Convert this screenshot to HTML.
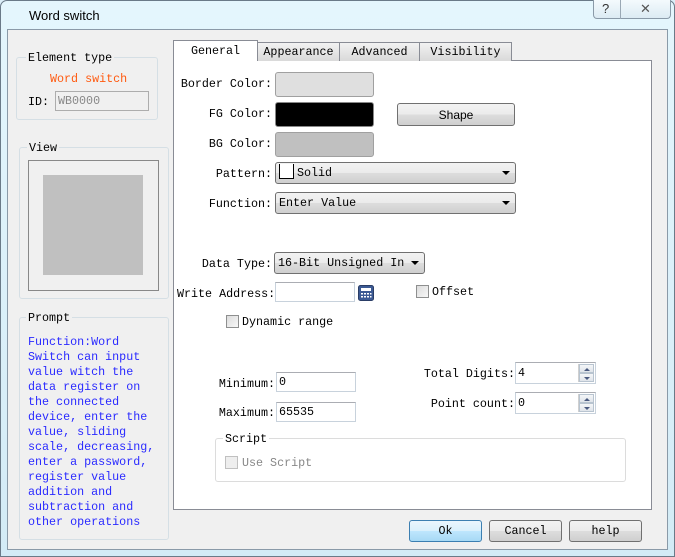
<!DOCTYPE html>
<html><head><style>
*{margin:0;padding:0;box-sizing:border-box}
body{width:675px;height:557px;overflow:hidden;background:#dbeef8;font-family:"Liberation Mono","Noto Sans CJK SC",monospace;font-size:11.7px;color:#000;position:relative}
.a{position:absolute}
.t{position:absolute;white-space:pre;line-height:14px;padding-top:2px}
.r{text-align:right}
.grp{position:absolute;border:1px solid #d5dfe5;border-radius:3px}
.leg{position:absolute;background:#f0f0f0;padding:1px 2px 0;line-height:14px;white-space:pre}
.btn{position:absolute;border:1px solid #707070;border-radius:3px;background:linear-gradient(#f2f2f2 0%,#ebebeb 50%,#dddddd 51%,#cfcfcf 100%);text-align:center;line-height:21px}
.inp{position:absolute;background:#fff;border:1px solid #c8d2dc;border-top-color:#abadb3;line-height:19px;padding-left:2px;white-space:pre}
.cb{position:absolute;width:13px;height:13px;border:1px solid #8e8f8f;background:linear-gradient(135deg,#dcdcdc,#f8f8f8)}
.combo{position:absolute;border:1px solid #707070;border-radius:3px;background:linear-gradient(#f2f2f2 0%,#ebebeb 50%,#dddddd 51%,#cfcfcf 100%);line-height:21px;padding-left:3px;white-space:pre}
.arr{position:absolute;right:5px;top:8px;width:0;height:0;border-left:4px solid transparent;border-right:4px solid transparent;border-top:4px solid #000}
.tab{position:absolute;border:1px solid #898c95;border-bottom:none;background:linear-gradient(#f2f2f2,#d9d9d9);text-align:center;line-height:19px}
.spin{position:absolute;right:1px;top:1px;width:16px;bottom:1px;border-left:1px solid #d0d0d0}
.spin div{height:50%;border:1px solid #b8c4d0;background:linear-gradient(#f4f6f8,#dfe4ea);position:relative}
.spin div:after{content:"";position:absolute;left:4px;top:3px;border-left:3px solid transparent;border-right:3px solid transparent}
.up:after{border-bottom:3px solid #4a5a80}
.dn:after{border-top:3px solid #4a5a80}
</style></head><body>
<div class="a" style="left:0;top:0;width:675px;height:557px;border:1px solid #6a7a88;border-radius:7px 7px 0 0;background:linear-gradient(#e4f6fd,#d3ebf6)"></div>
<div class="t" style="left:29px;top:6px;font-family:'Liberation Sans',sans-serif;font-size:13px;line-height:16px">Word switch</div>
<div class="a" style="left:593px;top:0;width:78px;height:19px;border:1px solid #8a9aa8;border-top:none;border-radius:0 0 4px 4px;background:linear-gradient(#f4fafd,#dcebf3)"></div>
<div class="a" style="left:620px;top:0;width:1px;height:19px;background:#9aa8b4"></div>
<div class="t" style="left:602px;top:0px;font-family:'Liberation Sans',sans-serif;font-size:13px;color:#333">?</div>
<div class="t" style="left:640px;top:0px;font-family:'Liberation Sans',sans-serif;font-size:13px;color:#555">✕</div>
<div class="a" style="left:7px;top:29px;width:661px;height:521px;background:#f0f0f0;border:1px solid #8a9aa8"></div>

<!-- Element type -->
<div class="grp" style="left:16px;top:57px;width:142px;height:63px"></div>
<div class="leg" style="left:26px;top:50px">Element type</div>
<div class="t" style="left:50px;top:70px;color:#ff5a10">Word switch</div>
<div class="t" style="left:28px;top:93px">ID:</div>
<div class="inp" style="left:55px;top:91px;width:94px;height:20px;background:#f0f0f0;color:#888;border-color:#adadad">WB0000</div>

<!-- View -->
<div class="grp" style="left:19px;top:147px;width:150px;height:152px"></div>
<div class="leg" style="left:27px;top:140px">View</div>
<div class="a" style="left:28px;top:160px;width:131px;height:131px;border:1px solid #888"></div>
<div class="a" style="left:43px;top:175px;width:100px;height:100px;background:#c0c0c0"></div>

<!-- Prompt -->
<div class="grp" style="left:19px;top:317px;width:150px;height:223px"></div>
<div class="leg" style="left:26px;top:310px">Prompt</div>
<div class="t" style="left:28px;top:333px;line-height:15px;color:#2a2aff">Function:Word
Switch can input
value witch the
data register on
the connected
device, enter the
value, sliding
scale, decreasing,
enter a password,
register value
addition and
subtraction and
other operations</div>

<!-- Tabs -->
<div class="a" style="left:173px;top:60px;width:479px;height:450px;background:#fff;border:1px solid #898c95"></div>
<div class="tab" style="left:257px;top:42px;width:83px;height:19px">Appearance</div>
<div class="tab" style="left:339px;top:42px;width:81px;height:19px">Advanced</div>
<div class="tab" style="left:419px;top:42px;width:93px;height:19px">Visibility</div>
<div class="tab" style="left:173px;top:40px;width:85px;height:21px;background:#fff;line-height:20px">General</div>

<div class="t r" style="left:170px;width:102px;top:75px">Border Color:</div>
<div class="btn" style="left:275px;top:72px;width:99px;height:25px;background:#dfdfdf;border-color:#a0a0a0"></div>
<div class="t r" style="left:170px;width:102px;top:105px">FG Color:</div>
<div class="btn" style="left:275px;top:102px;width:99px;height:25px;background:#000;border-color:#888"></div>
<div class="t r" style="left:170px;width:102px;top:135px">BG Color:</div>
<div class="btn" style="left:275px;top:132px;width:99px;height:25px;background:#c0c0c0;border-color:#a0a0a0"></div>
<div class="btn" style="left:397px;top:103px;width:118px;height:23px;line-height:22px;font-family:'Liberation Sans',sans-serif;font-size:12px">Shape</div>

<div class="t r" style="left:170px;width:102px;top:165px">Pattern:</div>
<div class="combo" style="left:275px;top:162px;width:241px;height:22px"><span style="display:inline-block;width:15px;height:15px;border:1px solid #000;border-top:none;vertical-align:-3px;background:#fff;margin-right:3px"></span>Solid<div class="arr"></div></div>
<div class="t r" style="left:170px;width:102px;top:195px">Function:</div>
<div class="combo" style="left:275px;top:192px;width:241px;height:22px">Enter Value<div class="arr"></div></div>

<div class="t r" style="left:170px;width:102px;top:255px">Data Type:</div>
<div class="combo" style="left:274px;top:252px;width:151px;height:22px">16-Bit Unsigned In<div class="arr"></div></div>

<div class="t" style="left:177px;top:285px">Write Address:</div>
<div class="inp" style="left:275px;top:282px;width:80px;height:20px"></div>
<svg class="a" style="left:358px;top:285px" width="16" height="16" viewBox="0 0 16 16"><rect x="0.5" y="0.5" width="15" height="15" rx="2" fill="#3c5a94" stroke="#2a3d66"/><rect x="3" y="3" width="10" height="3" fill="#fff"/><g fill="#fff"><rect x="3" y="8" width="2" height="1.5"/><rect x="6" y="8" width="2" height="1.5"/><rect x="9" y="8" width="2" height="1.5"/><rect x="12" y="8" width="1.5" height="1.5"/><rect x="3" y="11" width="2" height="1.5"/><rect x="6" y="11" width="2" height="1.5"/><rect x="9" y="11" width="2" height="1.5"/><rect x="12" y="11" width="1.5" height="1.5"/></g></svg>
<div class="cb" style="left:416px;top:285px"></div>
<div class="t" style="left:432px;top:283px">Offset</div>
<div class="cb" style="left:226px;top:315px"></div>
<div class="t" style="left:242px;top:313px">Dynamic range</div>

<div class="t r" style="left:200px;width:75px;top:375px">Minimum:</div>
<div class="inp" style="left:276px;top:372px;width:80px;height:20px">0</div>
<div class="t r" style="left:200px;width:75px;top:404px">Maximum:</div>
<div class="inp" style="left:276px;top:402px;width:80px;height:20px">65535</div>

<div class="t r" style="left:400px;width:115px;top:365px">Total Digits:</div>
<div class="inp" style="left:515px;top:362px;width:81px;height:22px;line-height:21px">4<div class="spin"><div class="up"></div><div class="dn"></div></div></div>
<div class="t r" style="left:400px;width:115px;top:395px">Point count:</div>
<div class="inp" style="left:515px;top:392px;width:81px;height:22px;line-height:21px">0<div class="spin"><div class="up"></div><div class="dn"></div></div></div>

<div class="grp" style="left:215px;top:438px;width:411px;height:44px;border-color:#dcdcdc"></div>
<div class="leg" style="left:223px;top:431px;background:#fff">Script</div>
<div class="cb" style="left:225px;top:456px;border-color:#c0c0c0;background:#eee"></div>
<div class="t" style="left:242px;top:454px;color:#888">Use Script</div>

<div class="btn" style="left:409px;top:520px;width:73px;height:22px;border-color:#3c7fb1;background:linear-gradient(#eaf6fd,#d9f0fc 50%,#bee6fd 51%,#a7d9f5)">Ok</div>
<div class="btn" style="left:489px;top:520px;width:73px;height:22px">Cancel</div>
<div class="btn" style="left:569px;top:520px;width:73px;height:22px">help</div>
</body></html>
